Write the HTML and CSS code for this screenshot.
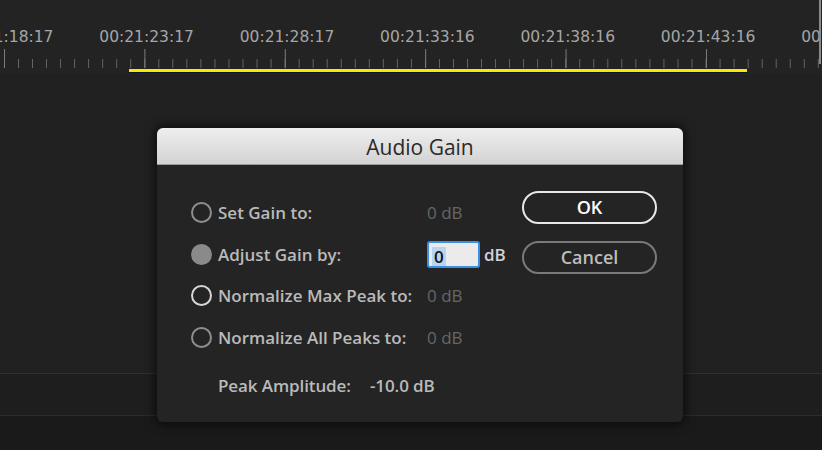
FILE: index.html
```html
<!DOCTYPE html>
<html>
<head>
<meta charset="utf-8">
<link rel="stylesheet" href="styles.css">
</head>
<body>
<div class="app">
  <div class="ruler">
    <div class="labels">
      <span>00:21:18:17</span>
      <span>00:21:23:17</span>
      <span>00:21:28:17</span>
      <span>00:21:33:16</span>
      <span>00:21:38:16</span>
      <span>00:21:43:16</span>
      <span>00:21:48:16</span>
    </div>
    <div class="ticks">
      <div class="workarea"></div>
    </div>
    <div class="edge"></div>
  </div>
  <div class="tracks"></div>
  <div class="band"></div>
  <div class="bottom"></div>

  <div class="dialog">
    <div class="titlebar">Audio Gain</div>
    <div class="dbody">
      <div class="form">
        <div class="grid">
          <span class="radio"></span>
          <span class="label">Set Gain to:</span>
          <span class="value dim">0 dB</span>

          <span class="radio filled"></span>
          <span class="label">Adjust Gain by:</span>
          <span class="value"><span class="input"><span class="sel">0</span></span><span class="unit">dB</span></span>

          <span class="radio focus"></span>
          <span class="label">Normalize Max Peak to:</span>
          <span class="value dim">0 dB</span>

          <span class="radio"></span>
          <span class="label">Normalize All Peaks to:</span>
          <span class="value dim">0 dB</span>
        </div>
        <div class="peak">
          <span class="plabel">Peak Amplitude:</span>
          <span class="pvalue">-10.0 dB</span>
        </div>
      </div>
      <div class="buttons">
        <div class="btn ok">OK</div>
        <div class="btn cancel">Cancel</div>
      </div>
    </div>
  </div>
</div>
</body>
</html>
```
FILE: styles.css
```css
html, body {
  margin: 0;
  padding: 0;
  background: #212121;
}
.app {
  position: relative;
  width: 822px;
  height: 450px;
  overflow: hidden;
  display: flex;
  flex-direction: column;
}
.ruler {
  position: relative;
  height: 74px;
  background: #232323;
  flex: none;
}
.labels {
  display: flex;
  margin-left: -64px;
  padding-top: 28px;
  height: 21px;
  white-space: nowrap;
}
.labels span {
  flex: none;
  width: 140.4px;
  text-align: center;
  font-family: "DejaVu Sans", sans-serif;
  font-size: 15.5px;
  line-height: 19px;
  color: #a6a6a6;
}
.ticks {
  height: 25px;
  padding-top: 20px;
  box-sizing: border-box;
  background-image:
    linear-gradient(90deg, #7c7c7c 0 1px, transparent 1px),
    linear-gradient(90deg, #666 0 1px, transparent 1px);
  background-size: 140.4px 19px, 14.04px 9px;
  background-position: 4px 0, 4px 10px;
  background-repeat: repeat-x, repeat-x;
}
.workarea {
  margin-left: 129px;
  width: 618px;
  height: 3px;
  background: #f5ea00;
  border-bottom: 1px solid #10142a;
}
.edge {
  position: absolute;
  left: 819px;
  top: 0;
  width: 2px;
  height: 64px;
  background: #8a8a8a;
}
.tracks {
  height: 299px;
  background: #212121;
  border-bottom: 1px solid #303030;
  flex: none;
}
.band {
  height: 41px;
  background: #1e1e1e;
  border-bottom: 1px solid #2c2c2c;
  flex: none;
}
.bottom {
  flex: 1;
  background: #1a1a1a;
}

.dialog {
  position: absolute;
  left: 157px;
  top: 128px;
  width: 526px;
  height: 294px;
  background: #242424;
  border-radius: 6px;
  box-shadow: 0 0 10px 3px rgba(0,0,0,0.55);
  font-family: "Open Sans", sans-serif;
}
.titlebar {
  height: 36px;
  border-radius: 6px 6px 0 0;
  background: linear-gradient(#eeeeee, #d3d3d3);
  border-bottom: 1px solid #9a9a9a;
  text-align: center;
  font-family: "Open Sans", sans-serif;
  font-size: 21px;
  line-height: 38px;
  color: #2a2a2a;
}
.dbody {
  display: flex;
  padding: 27px 0 0 34px;
}
.form {
  width: 331px;
}
.grid {
  display: grid;
  grid-template-columns: 27px 209px auto;
  grid-auto-rows: 41.6px;
  align-items: center;
}
.radio {
  box-sizing: border-box;
  width: 21px;
  height: 21px;
  border-radius: 50%;
  border: 2px solid #8e8e8e;
}
.radio.filled {
  border: none;
  background: #8a8a8a;
}
.radio.focus {
  border-color: #d6d6d6;
  border-width: 2.5px;
}
.label {
  font-size: 17px;
  font-weight: 600;
  color: #bababa;
  white-space: nowrap;
  letter-spacing: 0;
}
.value {
  display: flex;
  align-items: center;
  font-size: 17px;
  white-space: nowrap;
}
.dim {
  color: #676767;
}
.input {
  box-sizing: border-box;
  width: 53px;
  height: 27px;
  border: 2px solid #3d8fe6;
  border-radius: 3px;
  background: #ebebeb;
  padding: 2px 0 0 3px;
}
.sel {
  display: inline-block;
  background: #b7d5f3;
  color: #111;
  font-size: 17px;
  font-weight: 600;
  line-height: 19px;
  padding: 0 2px;
}
.unit {
  margin-left: 4px;
  color: #d2d2d2;
  font-size: 17px;
  font-weight: 600;
}
.peak {
  display: flex;
  margin-top: 16px;
  padding-left: 27px;
  font-size: 17px;
  font-weight: 600;
  color: #bababa;
  letter-spacing: -0.1px;
}
.plabel {
  width: 152px;
}
.buttons {
  display: flex;
  flex-direction: column;
  gap: 17px;
}
.btn {
  box-sizing: border-box;
  width: 135px;
  height: 33px;
  border-radius: 17px;
  text-align: center;
  font-size: 18px;
  line-height: 29px;
}
.ok {
  margin-top: -1px;
  border: 2px solid #e8e8e8;
  color: #ffffff;
  font-weight: 600;
}
.cancel {
  border: 2px solid #7a7a7a;
  color: #bcbcbc;
  font-weight: 600;
}
```
